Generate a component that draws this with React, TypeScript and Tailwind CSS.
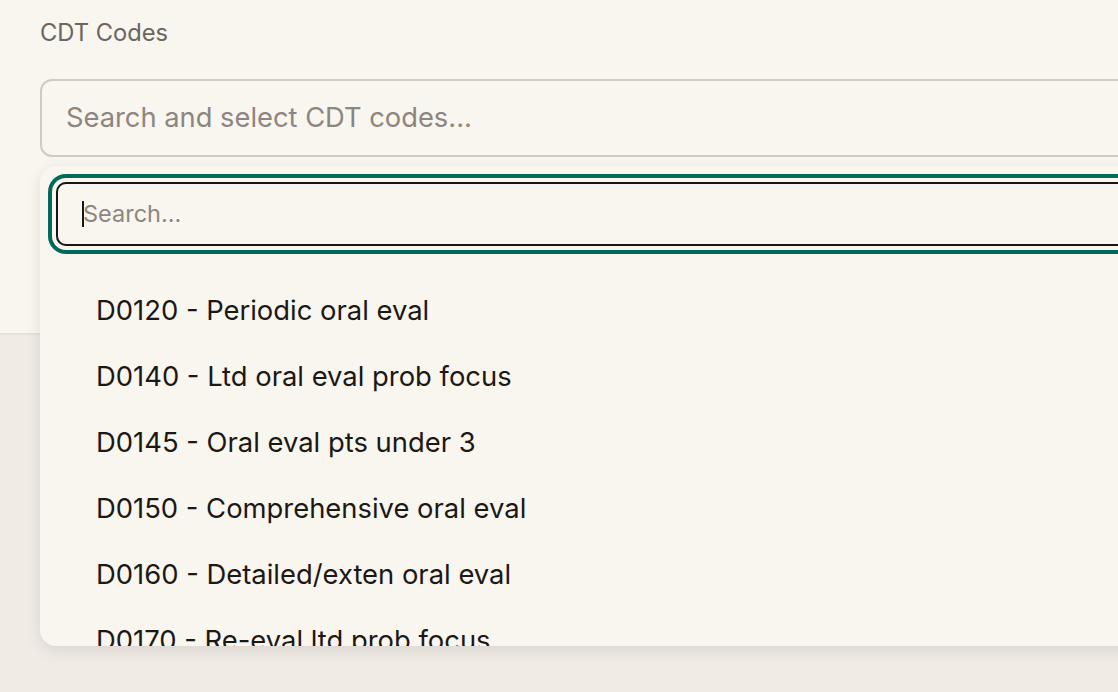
import React from "react";

const codes = [
    "D0120 - Periodic oral eval",
    "D0140 - Ltd oral eval prob focus",
    "D0145 - Oral eval pts under 3",
    "D0150 - Comprehensive oral eval",
    "D0160 - Detailed/exten oral eval",
    "D0170 - Re-eval ltd prob focus",
];

export default function App() {
    return (
        <div
            className="relative w-[1118px] h-[692px] overflow-hidden bg-[#f0ebe5]"
            style={{ fontFamily: "Inter, 'Noto Sans', sans-serif" }}
        >
            {/* Form card */}
            <section className="w-[1400px] h-[333px] bg-[#f9f5ef] shadow-[0_1px_3px_rgba(0,0,0,0.08)] pl-[40px] pt-[18px]">
                <label className="block text-[23.7px] leading-[30px] text-[#6b655f]">CDT Codes</label>
                <div className="mt-[31px] w-[1300px] h-[78px] rounded-[12px] border-2 border-[#cfcac3] flex items-center px-[24px]">
                    <span className="text-[27.3px] text-[#8c867f]">Search and select CDT codes...</span>
                </div>
            </section>

            {/* Dropdown */}
            <div className="absolute left-[40px] top-[166px] w-[1300px] h-[480px] rounded-[16px] bg-[#f9f5ef] shadow-[0_4px_16px_rgba(0,0,0,0.10)] overflow-hidden p-[16px]">
                <div className="h-[64px] rounded-[10px] border-2 border-[#1a1512] ring-4 ring-[#00695a] ring-offset-4 ring-offset-[#f9f5ef] flex items-center pl-[24px]">
                    <span className="w-[2px] h-[26px] bg-[#1a1512]" />
                    <span className="text-[23.5px] text-[#8c867f] -ml-[1px]">Search...</span>
                </div>
                <ul className="mt-[32px]">
                    {codes.map((c) => (
                        <li key={c} className="h-[66px] flex items-center pl-[40px] text-[27.4px] text-[#1c1814]">
                            {c}
                        </li>
                    ))}
                </ul>
            </div>
        </div>
    );
}
